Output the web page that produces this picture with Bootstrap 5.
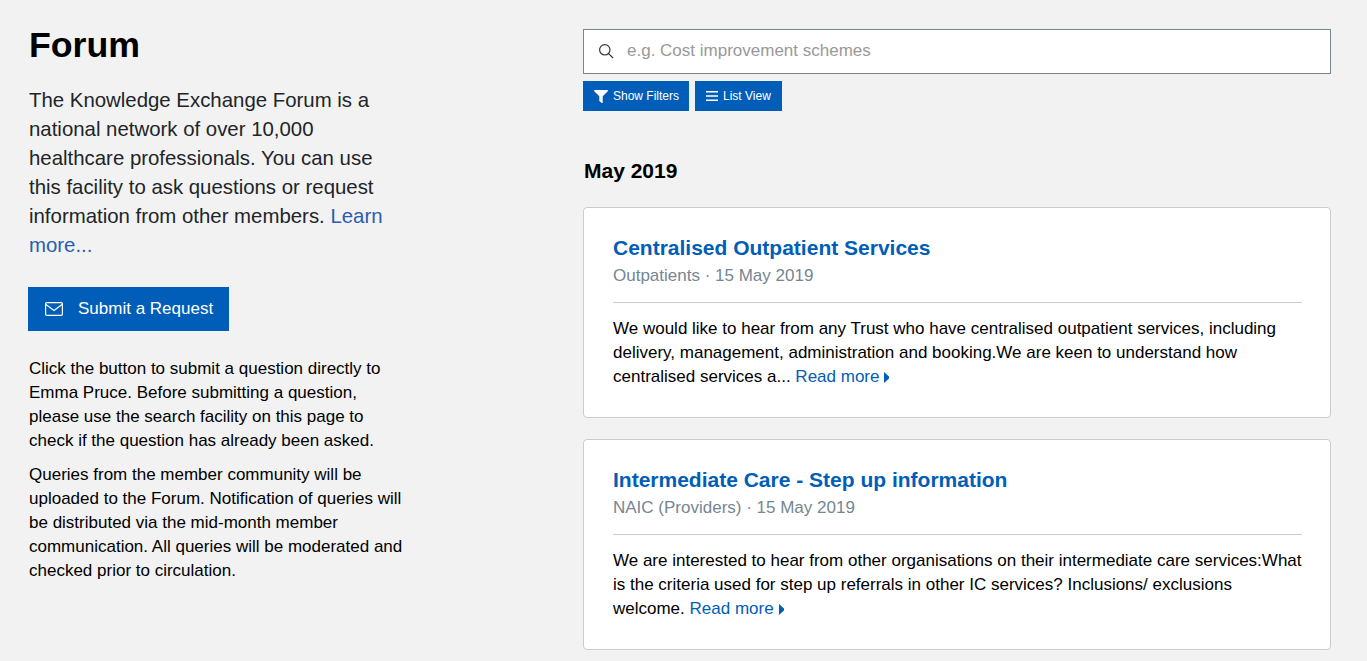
<!DOCTYPE html>
<html lang="en">
<head>
    <meta charset="UTF-8">
    <title>Forum</title>
    <link href="https://cdn.jsdelivr.net/npm/bootstrap@5.3.0/dist/css/bootstrap.min.css" rel="stylesheet">
    <style>
        html, body {
            height: 661px;
            overflow: hidden;
        }
        body {
            background-color: #f2f2f2;
            color: #000;
            font-family: "Liberation Sans", Arial, sans-serif;
            font-size: 17px;
            line-height: 24px;
        }
        a {
            color: #005eb8;
            text-decoration: none;
        }
        .page {
            display: flex;
            padding: 0 36px 0 28px;
        }
        .side {
            width: 555px;
            flex: none;
        }
        .main {
            width: 748px;
            flex: none;
            padding-top: 29px;
        }
        h1.title {
            font-size: 35.7px;
            font-weight: 700;
            line-height: 40px;
            margin: 25px 0 0 1px;
        }
        .intro {
            width: 360px;
            font-size: 20.4px;
            line-height: 29px;
            color: #212529;
            margin: 21px 0 27px 1px;
        }
        .intro a {
            color: #2a5db0;
        }
        .btn-nhs {
            background-color: #005eb8;
            color: #fff;
            border: 0;
            border-radius: 0;
        }
        .btn-nhs:hover {
            background-color: #004f9c;
            color: #fff;
        }
        .btn-submit {
            width: 201px;
            height: 44px;
            font-size: 17px;
            padding: 0 0 0 17px;
            gap: 15px;
        }
        .help {
            width: 376px;
            margin: 0 0 10px 1px;
        }
        .help-first {
            margin-top: 26px;
        }
        .search-box {
            height: 45px;
            background: #fff;
            border: 1px solid #768692;
            padding-left: 14px;
            gap: 13px;
        }
        .search-box svg {
            margin-bottom: 2px;
        }
        .search-box input {
            border: 0;
            outline: 0;
            flex: 1;
            font-size: 17px;
            line-height: 22px;
            padding: 0 0 2px;
            color: #212529;
        }
        .search-box input::placeholder {
            color: #999;
            opacity: 1;
        }
        .btn-tool {
            height: 30px;
            font-size: 12px;
            font-weight: 400;
            padding: 0 10px 0 11px;
            gap: 5px;
        }
        .btn-list {
            padding-right: 11px;
        }
        .tools {
            margin-top: 7px;
            gap: 6px;
        }
        .month {
            font-size: 21px;
            font-weight: 700;
            line-height: 24px;
            margin: 48px 0 24px 1px;
        }
        .post {
            height: 211px;
            padding: 24px 28px 0 29px;
            margin-bottom: 21px;
            border-color: #ccc;
            border-radius: 4px;
        }
        .post h2 {
            font-size: 21px;
            font-weight: 700;
            line-height: 32px;
            margin: 0;
        }
        .post .meta {
            color: #768692;
            font-size: 17px;
            line-height: 22px;
            margin-top: 1px;
        }
        .post hr {
            margin: 15px 0 14px;
            border-color: #ccc;
            opacity: 1;
        }
        .caret {
            display: inline-block;
            width: 5px;
            height: 11px;
            margin-left: 5px;
        }
    </style>
</head>
<body>
    <div class="page">
        <div class="side">
            <h1 class="title">Forum</h1>
            <p class="intro">The Knowledge Exchange Forum is a national network of over 10,000 healthcare professionals. You can use this facility to ask questions or request information from other members. <a href="#">Learn more...</a></p>
            <a href="#" class="btn btn-nhs btn-submit d-inline-flex align-items-center">
                <svg width="18" height="14" viewBox="0 0 18 14" fill="none" stroke="#fff" stroke-width="1.2"><rect x=".6" y=".6" width="16.8" height="12.8" rx="1.2"/><path d="M1 2.5 9 8.5l8-6"/></svg>
                Submit a Request
            </a>
            <p class="help help-first">Click the button to submit a question directly to Emma Pruce. Before submitting a question, please use the search facility on this page to check if the question has already been asked.</p>
            <p class="help">Queries from the member community will be uploaded to the Forum. Notification of queries will be distributed via the mid-month member communication. All queries will be moderated and checked prior to circulation.</p>
        </div>
        <div class="main">
            <div class="search-box d-flex align-items-center">
                <svg width="16" height="16" viewBox="0 0 16 16" fill="none" stroke="#333" stroke-width="1.2"><circle cx="6.8" cy="6.8" r="5.2"/><path d="m10.6 10.6 4.4 4.4"/></svg>
                <input type="text" placeholder="e.g. Cost improvement schemes">
            </div>
            <div class="tools d-flex">
                <button class="btn btn-nhs btn-tool d-inline-flex align-items-center">
                    <svg width="14" height="13" viewBox="0 0 14 13" fill="#fff"><path d="M.7 0h12.6c.6 0 .9.7.5 1.2L8.7 6.3V12.4c0 .5-.5.8-.9.5L5.6 11.2c-.2-.1-.3-.3-.3-.5V6.3L.2 1.2C-.2.7.1 0 .7 0z"/></svg>
                    Show Filters
                </button>
                <button class="btn btn-nhs btn-tool btn-list d-inline-flex align-items-center">
                    <svg width="12" height="10" viewBox="0 0 12 10" fill="#fff"><path d="M0 0h12v1.6H0zM0 4.2h12v1.6H0zM0 8.4h12V10H0z"/></svg>
                    List View
                </button>
            </div>
            <div class="month">May 2019</div>
            <div class="card post">
                <h2><a href="#">Centralised Outpatient Services</a></h2>
                <div class="meta">Outpatients · 15 May 2019</div>
                <hr>
                <div>We would like to hear from any Trust who have centralised outpatient services, including delivery, management, administration and booking.We are keen to understand how centralised services a... <a href="#">Read more<svg class="caret" viewBox="0 0 5 11" fill="#005eb8"><path d="M0 0l5 4.5v2L0 11z"/></svg></a></div>
            </div>
            <div class="card post">
                <h2><a href="#">Intermediate Care - Step up information</a></h2>
                <div class="meta">NAIC (Providers) · 15 May 2019</div>
                <hr>
                <div>We are interested to hear from other organisations on their intermediate care services:What is the criteria used for step up referrals in other IC services? Inclusions/ exclusions welcome. <a href="#">Read more<svg class="caret" viewBox="0 0 5 11" fill="#005eb8"><path d="M0 0l5 4.5v2L0 11z"/></svg></a></div>
            </div>
        </div>
    </div>
    <script src="https://cdn.jsdelivr.net/npm/bootstrap@5.3.0/dist/js/bootstrap.bundle.min.js"></script>
</body>
</html>
